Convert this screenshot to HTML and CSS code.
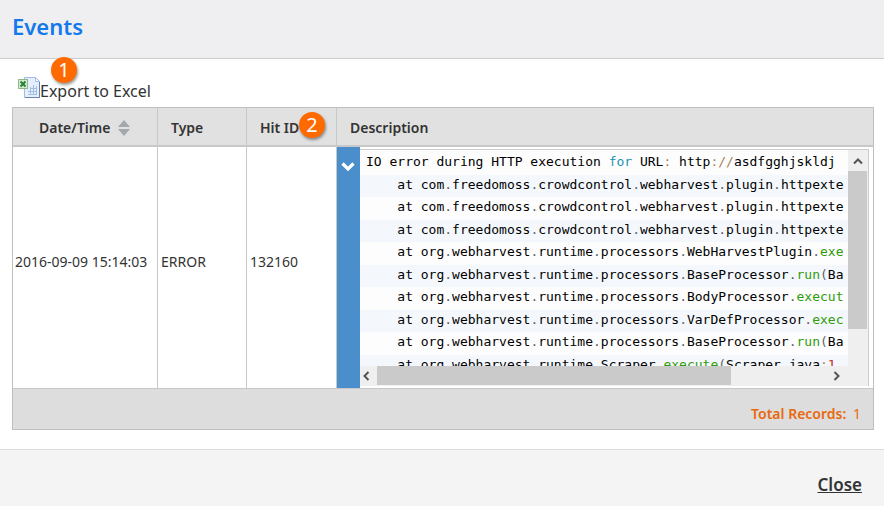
FILE: index.html
```
<!DOCTYPE html>
<html lang="en">
<head>
    <meta charset="UTF-8">
    <meta name="viewport" content="width=device-width, initial-scale=1.0">
    <link rel="stylesheet" href="styles.css">
    <title>Events</title>
</head>
<body>
    <header class="title-bar">
        <h1>Events</h1>
    </header>

    <main class="content">
        <div class="toolbar">
            <a class="export" href="#export">
                <svg class="excel" width="24" height="24" viewBox="0 0 24 24">
                    <path d="M6.500 .5h11l4 4v16h-15z" fill="#e4effc" stroke="#a3bbe6"/>
                    <path d="M7 20.500h14.500V5" fill="none" stroke="#6681bd"/>
                    <path d="M17.500 .5v4h4z" fill="#fff" stroke="#a3bbe6"/>
                    <path d="M10 14.500h9M10 17.500h9M12 11.500h7M12.500 10v8M15.500 8v10M18.500 9v9" stroke="#a3bee8" fill="none"/>
                    <rect x=".5" y="2.500" width="9" height="9" fill="#d5ebd0" stroke="#8fb98a"/>
                    <path d="M2.500 4.500l5 5M7.500 4.500l-5 5" stroke="#278235" stroke-width="2"/>
                </svg>
                <span>Export to Excel</span>
            </a>
            <span class="marker marker-export">1</span>
        </div>

        <table class="events">
            <colgroup>
                <col class="col-date">
                <col class="col-type">
                <col class="col-hit">
                <col>
            </colgroup>
            <thead>
                <tr>
                    <th class="date-head">
                        <button class="sort" type="button">Date/Time
                            <svg width="12" height="16" viewBox="0 0 12 16"><path d="M6 0l6 7H0zM0 9h12l-6 7z" fill="#a3a8ac"/></svg>
                        </button>
                    </th>
                    <th>Type</th>
                    <th class="hit-head">Hit ID<span class="marker marker-hit">2</span></th>
                    <th>Description</th>
                </tr>
            </thead>
            <tbody>
                <tr>
                    <td>2016-09-09 15:14:03</td>
                    <td>ERROR</td>
                    <td>132160</td>
                    <td class="desc">
                        <div class="detail">
                            <button class="toggle" type="button" aria-label="Collapse">
                                <svg width="14" height="10" viewBox="0 0 14 10"><path d="M1.500 1.500L7 7l5.500-5.500" fill="none" stroke="#fff" stroke-width="3.200"/></svg>
                            </button>
                            <div class="code-box">
                                <div class="code">
                                    <pre>IO error during HTTP execution <i class="kw">for</i> URL<i class="op">:</i> http<i class="op">://</i>asdfgghjskldj</pre>
                                    <pre>    at com<i>.</i>freedomoss<i>.</i>crowdcontrol<i>.</i>webharvest<i>.</i>plugin<i>.</i>httpexte</pre>
                                    <pre>    at com<i>.</i>freedomoss<i>.</i>crowdcontrol<i>.</i>webharvest<i>.</i>plugin<i>.</i>httpexte</pre>
                                    <pre>    at com<i>.</i>freedomoss<i>.</i>crowdcontrol<i>.</i>webharvest<i>.</i>plugin<i>.</i>httpexte</pre>
                                    <pre>    at org<i>.</i>webharvest<i>.</i>runtime<i>.</i>processors<i>.</i>WebHarvestPlugin<i>.</i><i class="fn">exe</i></pre>
                                    <pre>    at org<i>.</i>webharvest<i>.</i>runtime<i>.</i>processors<i>.</i>BaseProcessor<i>.</i><i class="fn">run</i><i>(</i>Ba</pre>
                                    <pre>    at org<i>.</i>webharvest<i>.</i>runtime<i>.</i>processors<i>.</i>BodyProcessor<i>.</i><i class="fn">execut</i></pre>
                                    <pre>    at org<i>.</i>webharvest<i>.</i>runtime<i>.</i>processors<i>.</i>VarDefProcessor<i>.</i><i class="fn">exec</i></pre>
                                    <pre>    at org<i>.</i>webharvest<i>.</i>runtime<i>.</i>processors<i>.</i>BaseProcessor<i>.</i><i class="fn">run</i><i>(</i>Ba</pre>
                                    <pre>    at org<i>.</i>webharvest<i>.</i>runtime<i>.</i>Scraper<i>.</i><i class="fn">execute</i><i>(</i>Scraper<i>.</i>java<i class="op">:</i><i class="num">1</i></pre>
                                </div>
                                <div class="vbar">
                                    <button type="button" aria-label="Scroll up"><svg width="10" height="8" viewBox="0 0 10 8"><path d="M1 6.500l4-4 4 4" fill="none" stroke="#555" stroke-width="2"/></svg></button>
                                    <div class="thumb"></div>
                                </div>
                                <div class="hbar">
                                    <button type="button" aria-label="Scroll left"><svg width="8" height="10" viewBox="0 0 8 10"><path d="M6.500 1l-4 4 4 4" fill="none" stroke="#555" stroke-width="2"/></svg></button>
                                    <div class="track"><div class="thumb"></div></div>
                                    <button type="button" aria-label="Scroll right"><svg width="8" height="10" viewBox="0 0 8 10"><path d="M1.500 1l4 4-4 4" fill="none" stroke="#555" stroke-width="2"/></svg></button>
                                </div>
                            </div>
                        </div>
                    </td>
                </tr>
            </tbody>
            <tfoot>
                <tr>
                    <td colspan="4"><b>Total Records:</b> 1</td>
                </tr>
            </tfoot>
        </table>
    </main>

    <footer class="actions">
        <a href="#close">Close</a>
    </footer>
</body>
</html>
```
FILE: styles.css
```
*{box-sizing: border-box;}
body{margin: 0;min-height: 100vh;display: flex;flex-direction: column;background: #fff;color: #333;font-family: "Noto Sans", "Open Sans", sans-serif;font-size: 14px;}
button{margin: 0;padding: 0;border: 0;background: none;font: inherit;color: inherit;}
svg{display: block;flex: none;}

.title-bar{padding: 10px 12px 16px;background: #efeff2;border-bottom: 1px solid #ccc;}
.title-bar h1{margin: 0;font-size: 22px;line-height: 32px;font-weight: 600;color: #147aeb;}

.content{padding: 18px 10px 19px 12px;}
.toolbar{position: relative;padding-left: 6px;height: 30px;}
.export{display: inline-flex;color: #333;font-size: 16px;line-height: 28px;text-decoration: none;}
.export span{margin-left: -2px;}
.marker{position: absolute;width: 26px;height: 26px;border-radius: 50%;background: #ff6a00;color: #fff;font-size: 20px;line-height: 25px;font-weight: 400;text-align: center;box-shadow: 1px 2px 3px rgba(0,0,0,.4);}
.marker-export{left: 39px;top: -20px;}
.marker-hit{left: 52px;top: 4px;}

.events{width: 100%;table-layout: fixed;border-collapse: separate;border-spacing: 0;border: 1px solid #bfbfbf;}
.col-date{width: 145px;}
.col-type{width: 89px;}
.col-hit{width: 90px;}
.events th{height: 39px;padding: 2px 13px 0;background: #e1e1e1;border-bottom: 2px solid #c8c8c8;border-right: 1px solid #c8c8c8;text-align: left;font-weight: 600;}
.events th:last-child, .events td:last-child{border-right: 0;}
.events .date-head{padding-left: 26px;}
.events .hit-head{position: relative;}
.sort{display: flex;align-items: center;gap: 8px;font-weight: 600;}
.events td{padding: 0 2px 12px 3px;border-right: 1px solid #c8c8c8;white-space: nowrap;}
.events td:first-child{padding-left: 2px;}
.events td.desc{padding: 0;}
.events tfoot td{height: 41px;padding: 8px 12px 0;border-top: 1px solid #c8c8c8;background: #ddd;color: #e8690f;text-align: right;}
.events tfoot b{font-weight: 600;margin-right: 3px;}

.detail{display: flex;}
.toggle{flex: none;width: 23px;padding: 15px 2px 0 0;display: flex;justify-content: center;align-items: flex-start;background: #4a8ecb;}
.code-box{flex: 1;min-width: 0;margin: 2px 4px 2px 0;display: grid;grid-template-columns: minmax(0, 1fr) 20px;grid-template-rows: 216px 20px;border: 1px solid #ccc;border-left: 0;border-bottom: 0;background: #efefef;}
/* ten lines share the block, the last one is cut by the scrollbar */
.code{overflow: hidden;display: grid;grid-template-rows: repeat(10, 1fr);height: 227px;padding-top: 2px;background: #fdfdfd;clip-path: inset(0 0 11px 0);}
.code pre{margin: 0;padding-left: 6px;font-family: "DejaVu Sans Mono", monospace;font-size: 13px;line-height: 20px;color: #000;}
.code pre:nth-child(even){background: #f4f8fc;}
.code i{font-style: normal;color: #5f6364;}
.code .kw{color: #1990b8;}
.code .op{color: #a67f59;}
.code .fn{color: #2f9c0a;}
.code .num{color: #c92c2c;}

.vbar, .hbar{background: #efefef;}
.thumb{background: #cacaca;}
.vbar{display: flex;flex-direction: column;padding-right: 1px;}
.vbar button{height: 21px;display: grid;place-items: center;}
.vbar .thumb{height: 158px;}
.hbar{display: flex;position: relative;}
.hbar button{width: 17px;display: grid;place-items: center;justify-content: start;padding-left: 2px;}
.hbar .track{flex: 1;}
.hbar .thumb{width: 78%;height: 19px;}

.actions{flex: 1;padding: 22px 22px 20px;border-top: 1px solid #ddd;background: #f4f4f4;text-align: right;}
.actions a{color: #333;font-size: 17px;line-height: 26px;font-weight: 600;}
```
